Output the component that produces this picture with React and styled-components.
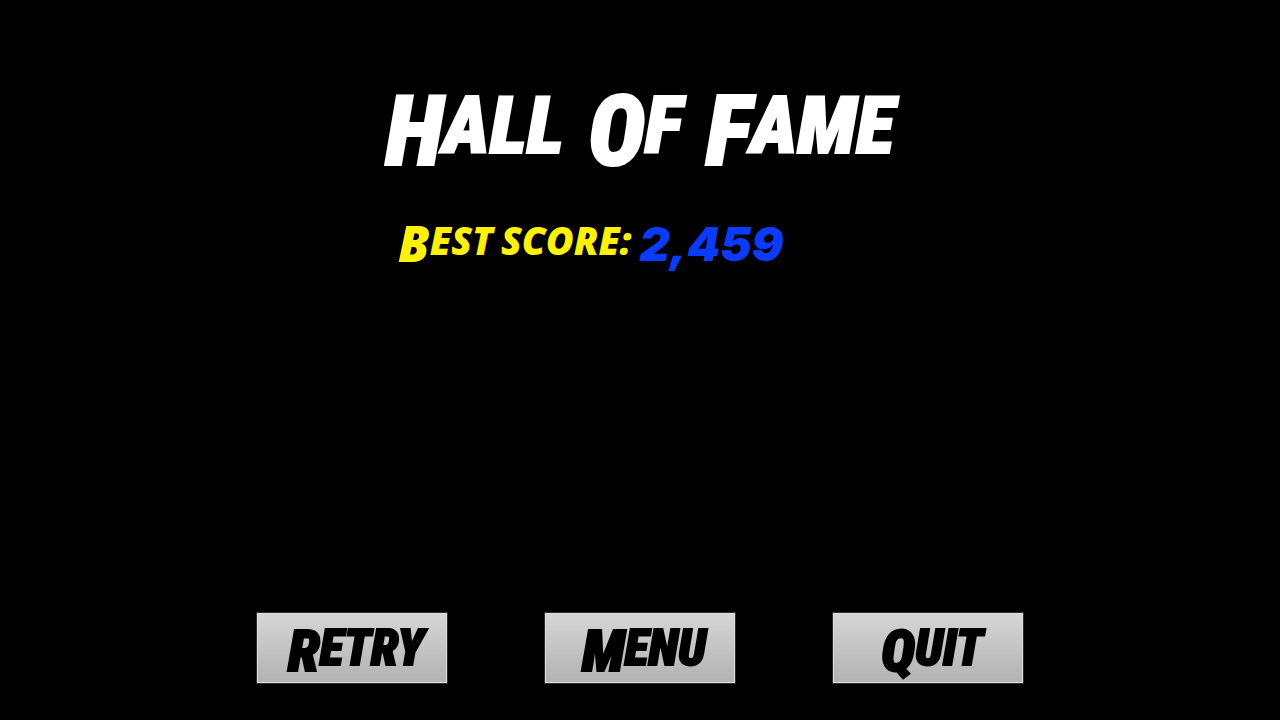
import React from "react";
import styled, { createGlobalStyle } from "styled-components";

const GlobalStyle = createGlobalStyle`
  * { box-sizing: border-box; }
  body { margin: 0; background: #000; }
`;

const Screen = styled.main`
  min-height: 100vh;
  display: flex;
  flex-direction: column;
  align-items: center;
  padding: 78px 20% 36px;
  background: #000;
  color: #fff;
  font-family: "Roboto Condensed", "Open Sans", sans-serif;
  font-weight: 900;
  font-style: italic;
`;

/* Comic-style word: the large initial hangs below the smaller capitals. */
const Word = styled.span`
  display: inline-block;
  text-transform: uppercase;
  white-space: nowrap;

  &::first-letter {
    font-size: ${(p) => p.$initial};
    vertical-align: ${(p) => p.$drop};
  }
`;

const Title = styled.h1`
  margin: 0;
  display: flex;
  gap: 24px;
  font-size: 80px;
  line-height: 96px;
  font-weight: inherit;
  -webkit-text-stroke: 2px currentColor;
`;

const ScoreLine = styled.dl`
  margin: 36px 0 0;
  width: 63%;
  display: flex;
  align-items: flex-start;
  gap: 8px;
  font-family: "Open Sans", sans-serif;
`;

const ScoreLabel = styled.dt`
  display: flex;
  gap: 8px;
  color: #fff200;
  font-size: 38px;
  line-height: 48px;
`;

const ScoreValue = styled.dd`
  margin: 0;
  color: #0a3cff;
  font-family: "Inter", sans-serif;
  font-size: 47px;
  line-height: 56px;
`;

const Actions = styled.nav`
  width: 100%;
  margin-top: auto;
  display: flex;
  gap: 12.5%;
`;

const ActionButton = styled.button`
  flex: 1;
  height: 72px;
  padding: 2px 0 0 8px;
  border: 1px solid #2c2c2c;
  background: linear-gradient(#d6d6d6, #b2b2b2);
  box-shadow: inset 0 0 0 1px #dedede;
  color: #000;
  font: inherit;
  font-size: 50px;
  line-height: 56px;
  -webkit-text-stroke: 2px currentColor;
  cursor: pointer;
`;

const actions = ["Retry", "Menu", "Quit"];

export default function App() {
  return (
    <Screen>
      <GlobalStyle />
      <Title>
        <Word $initial="97px" $drop="-12px">Hall</Word>{" "}
        <Word $initial="97px" $drop="-12px">Of</Word>{" "}
        <Word $initial="97px" $drop="-12px">Fame</Word>
      </Title>
      <ScoreLine>
        <ScoreLabel>
          <Word $initial="50px" $drop="-7px">Best</Word>{" "}
          <Word $initial="38px" $drop="0">score:</Word>
        </ScoreLabel>
        <ScoreValue>2,459</ScoreValue>
      </ScoreLine>
      <Actions>
        {actions.map((label) => (
          <ActionButton key={label} type="button">
            <Word $initial="58px" $drop="-6px">{label}</Word>
          </ActionButton>
        ))}
      </Actions>
    </Screen>
  );
}
